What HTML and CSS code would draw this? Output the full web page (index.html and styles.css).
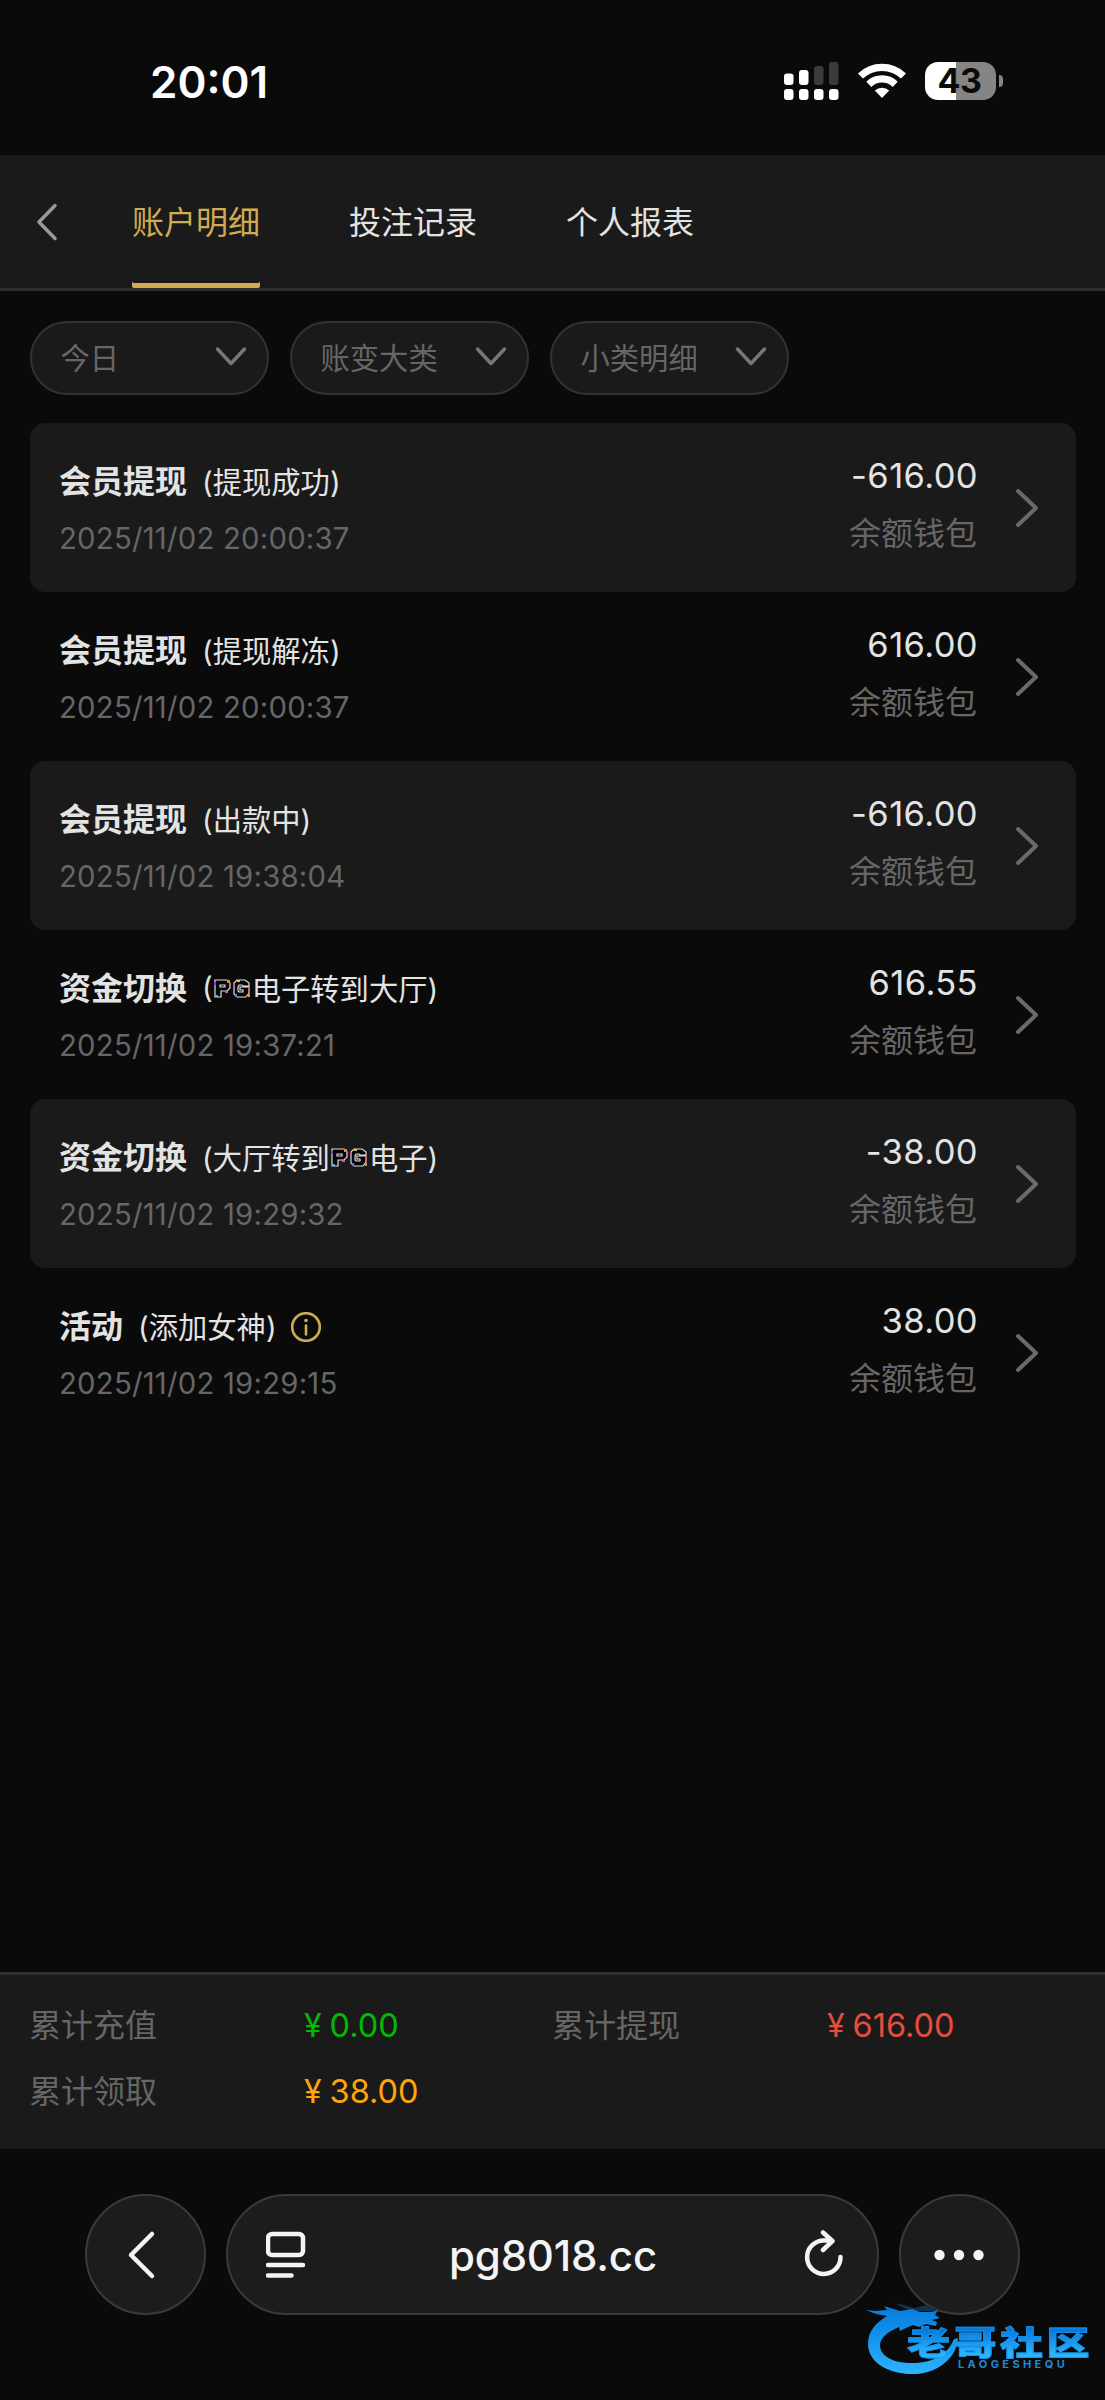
FILE: index.html
```html
<!DOCTYPE html>
<html lang="zh-CN">
<head>
<meta charset="utf-8">
<title>账户明细</title>
<link rel="stylesheet" href="styles.css">
</head>
<body>
<svg width="0" height="0" class="defs">
  <defs>
    <symbol id="next" viewBox="0 0 24 40"><path d="M3 3 21 20 3 37"/></symbol>
    <symbol id="down" viewBox="0 0 32 22"><path d="M2.500 3 16 17.500 29.500 3"/></symbol>
    <symbol id="pg" viewBox="0 0 39 22">
      <path d="M2 2h12l3 3v5l-3 3H8v6H2zM7 7h5v2H7z"/>
      <path d="M24 2h8l4 3v3h-6l-1-1h-3l-1 2v4l1 1h4v-2h-3V9h9v6l-3 4h-9l-3-3V5z"/>
      <g stroke="none"><path fill="#7a35e8" d="M1 4h2v3H1z"/><path fill="#f0883c" d="M14 2h3v3h-3zM35 16h2v3h-2z"/><path fill="#df4bc8" d="M12 13h3v2h-3z"/><path fill="#45bde0" d="M2 17h3v2H2z"/><path fill="#ef4d9d" d="M20 5h2v3h-2z"/><path fill="#e8b93c" d="M24 2h3v2h-3z"/><path fill="#3f8fe8" d="M22 16h2v3h-2z"/><path fill="#ee5a45" d="M35 9h2v3h-2z"/></g>
    </symbol>
  </defs>
</svg>
<header class="status">
  <div class="time">20:01</div>
  <div class="indicators">
    <svg class="signal" width="56" height="40" viewBox="0 0 56 40">
      <g fill="#fff">
        <rect x="0" y="11.500" width="9.500" height="11.500" rx="3"/><rect x="15" y="8" width="9.500" height="15" rx="3"/>
        <rect x="0" y="27" width="9.500" height="11" rx="3"/><rect x="15" y="27" width="9.500" height="11" rx="3"/><rect x="30" y="27" width="9.500" height="11" rx="3"/><rect x="45" y="27" width="9.500" height="11" rx="3"/>
      </g>
      <g fill="#3b3b3b"><rect x="30" y="4" width="9.500" height="19" rx="3"/><rect x="45" y="0" width="9.500" height="23" rx="3"/></g>
    </svg>
    <svg class="wifi" width="48" height="36" viewBox="0 0 48 36">
      <g fill="none" stroke="#fff" stroke-width="7.200"><path d="M2.500 13a31 31 0 0 1 43 0"/><path d="M10.800 21.300a19 19 0 0 1 26.400 0"/></g>
      <path fill="#fff" d="M16.800 27.500a10.500 10.500 0 0 1 14.400 0L24 35z"/>
    </svg>
    <div class="battery"><span>43</span></div>
    <i class="nub"></i>
  </div>
</header>
<nav class="tabs">
  <svg class="back" width="24" height="38" viewBox="0 0 24 38"><path d="M20 2.500 4 19 20 35.500"/></svg>
  <a class="tab active">账户明细</a>
  <a class="tab">投注记录</a>
  <a class="tab">个人报表</a>
</nav>
<main>
  <div class="filters">
    <div class="filter"><span>今日</span><svg><use href="#down"/></svg></div>
    <div class="filter"><span>账变大类</span><svg><use href="#down"/></svg></div>
    <div class="filter"><span>小类明细</span><svg><use href="#down"/></svg></div>
  </div>
  <section class="list">
    <article class="row">
      <div class="info"><h2>会员提现<span>(提现成功)</span></h2><time>2025/11/02 20:00:37</time></div>
      <div class="money"><b>-616.00</b><span>余额钱包</span></div><svg class="next"><use href="#next"/></svg>
    </article>
    <article class="row">
      <div class="info"><h2>会员提现<span>(提现解冻)</span></h2><time>2025/11/02 20:00:37</time></div>
      <div class="money"><b>616.00</b><span>余额钱包</span></div><svg class="next"><use href="#next"/></svg>
    </article>
    <article class="row">
      <div class="info"><h2>会员提现<span>(出款中)</span></h2><time>2025/11/02 19:38:04</time></div>
      <div class="money"><b>-616.00</b><span>余额钱包</span></div><svg class="next"><use href="#next"/></svg>
    </article>
    <article class="row">
      <div class="info"><h2>资金切换<span>(<svg class="pg"><use href="#pg"/></svg>电子转到大厅)</span></h2><time>2025/11/02 19:37:21</time></div>
      <div class="money"><b>616.55</b><span>余额钱包</span></div><svg class="next"><use href="#next"/></svg>
    </article>
    <article class="row">
      <div class="info"><h2>资金切换<span>(大厅转到<svg class="pg"><use href="#pg"/></svg>电子)</span></h2><time>2025/11/02 19:29:32</time></div>
      <div class="money"><b>-38.00</b><span>余额钱包</span></div><svg class="next"><use href="#next"/></svg>
    </article>
    <article class="row">
      <div class="info"><h2>活动<span>(添加女神)</span><svg class="tip" width="30" height="30" viewBox="0 0 30 30"><circle cx="15" cy="15" r="13.800"/><path d="M15 13.500v9"/><circle class="dot" cx="15" cy="8.500" r="1.800"/></svg></h2><time>2025/11/02 19:29:15</time></div>
      <div class="money"><b>38.00</b><span>余额钱包</span></div><svg class="next"><use href="#next"/></svg>
    </article>
  </section>
</main>
<footer class="totals">
  <span>累计充值</span><b class="green"><i>¥</i>0.00</b><span>累计提现</span><b class="red"><i>¥</i>616.00</b>
  <span>累计领取</span><b class="orange"><i>¥</i>38.00</b>
</footer>
<div class="browser">
  <div class="glass round"><svg class="prev" width="32" height="50" viewBox="0 0 32 50"><path d="M26 4 5 25 26 46"/></svg></div>
  <div class="glass address">
    <svg width="40" height="48" viewBox="0 0 40 48"><rect x="2" y="3" width="35" height="21" rx="4"/><path d="M2 34h35M2 44.500h23.500"/></svg>
    <span>pg8018.cc</span>
    <svg width="40" height="50" viewBox="0 0 40 50"><path d="M36.500 27A16.700 16.700 0 1 1 19.800 10.500h8M19 2.500l9.500 8.500-9.500 9"/></svg>
  </div>
  <div class="glass round"><svg class="more" width="50" height="12" viewBox="0 0 50 12"><g class="dots"><circle cx="5.500" cy="6" r="5.200"/><circle cx="25" cy="6" r="5.200"/><circle cx="44.500" cy="6" r="5.200"/></g></svg></div>
  <div class="watermark">
    <svg width="94" height="76" viewBox="0 0 94 76">
      <defs><linearGradient id="blue" x2="0" y2="1"><stop offset="0" stop-color="#087bdc"/><stop offset=".5" stop-color="#1495ee"/><stop offset="1" stop-color="#2db4ff"/></linearGradient></defs>
      <path fill="#12324c" d="M28 0 38 2 48 5 61 2 69 5 73 9 60 8 49 8 40 6z"/>
      <path fill="url(#blue)" d="M0 7 10 8 21 7 18 3 34 8 46 6 54 9 66 9 72 7 69 12 74 15 66 17 71 19 70 23 60 21 53 24 47 22 40 25 34 28 33 24C21 29 14 35 14 43 15 55 31 61 50 60 68 59 82 51 88 36L92 35C91 56 70 70 50 71 22 72 2 59 2 41 2 29 9 20 21 13L10 11z"/>
    </svg>
    <strong>老哥社区</strong>
    <small>LAOGESHEQU</small>
  </div>
</div>
</body>
</html>
```
FILE: styles.css
```css
* { box-sizing: border-box; }
body {
  margin: 0;
  width: 1105px;
  height: 2400px;
  display: flex;
  flex-direction: column;
  overflow: hidden;
  background: #0a0a0a;
  color: #e3e3e3;
  font-family: Inter, "Noto Sans CJK SC", sans-serif;
  font-size: 32px;
}
svg { fill: none; stroke-linecap: round; stroke-linejoin: round; flex: none; }
.defs { position: absolute; }
h2, b, i { font-weight: 400; font-style: normal; margin: 0; }

.status { height: 155px; flex: none; display: flex; justify-content: space-between; padding: 55px 102px 0 150px; color: #fff; }
.time { font-size: 44px; font-weight: 600; line-height: 54px; height: 54px; }
.indicators { display: flex; align-items: flex-start; padding-top: 7px; }
.signal, .wifi { stroke-linecap: butt; }
.wifi { margin: 1px 19px 0 18px; }
.battery { width: 71px; height: 38px; padding-right: 2px; border-radius: 13px; background: linear-gradient(90deg, #fff 31px, #858585 31px); color: #0a0a0a; font-size: 34px; font-weight: 700; line-height: 38px; text-align: center; letter-spacing: -0.5px; }
.nub { width: 4px; height: 12px; margin: 13px 0 0 3px; border-radius: 0 6px 6px 0; background: #858585; }

.tabs { height: 136px; flex: none; display: flex; align-items: stretch; gap: 89px; padding-left: 35px; background: #1a1a1a; border-bottom: 3px solid #2e2e2e; }
.back { align-self: center; margin-right: -16px; stroke: #999; stroke-width: 3.5; }
.tab { display: flex; align-items: center; width: 128px; border-radius: 2px; white-space: nowrap; padding-bottom: 4px; }
.tab.active { color: #d0ab52; box-shadow: inset 0 -5px #d0ab52; }

main { flex: 1; padding: 29.5px 29.5px 0; }
.filters { display: flex; gap: 21px; }
.filter { width: 239px; height: 74px; display: flex; align-items: center; justify-content: space-between; padding: 0 20px 2px 29px; border: 2px solid #323232; border-radius: 37px; background: #1a1a1a; color: #666; font-size: 29.3px; }
.filter span { padding-bottom: 2px; }
.filter svg { width: 32px; height: 22px; stroke: #777; stroke-width: 3.5; }

.list { margin-top: 28.5px; }
.row { height: 169px; display: flex; padding: 0 36.5px 0 29.5px; border-radius: 15px; }
.row:nth-child(odd) { background: #1a1a1a; }
.info { flex: 1; padding-top: 32px; }
.info h2 { display: flex; align-items: center; height: 48px; font-size: 32px; font-weight: 700; }
.info h2 span { display: flex; align-items: center; margin: 2px 0 0 15px; font-size: 29.3px; font-weight: 400; }
.info time { display: block; margin-top: 18px; font-size: 29.3px; line-height: 36px; color: #666; letter-spacing: .22px; }
.pg { width: 39px; height: 22px; stroke: #ddd; stroke-width: 1.2; fill: #050505; stroke-linejoin: miter; margin-top: 4px; }
.tip { margin: 6px 0 0 14px; stroke: #d0ab52; stroke-width: 2.6; }
.tip .dot { fill: #d0ab52; stroke: none; }
.money { display: flex; flex-direction: column; align-items: flex-end; padding-top: 32px; }
.money b { font-size: 34.5px; line-height: 42px; letter-spacing: .4px; margin-right: -1px; }
.money span { margin: 13px 0 0; line-height: 48px; color: #666; }
.next { width: 24px; height: 40px; align-self: center; margin-left: 38px; stroke: #6a6a6a; stroke-width: 4; }

.totals { height: 177px; flex: none; display: grid; grid-template-columns: 274px 249px 274px 250px; grid-auto-rows: 66px; align-items: center; padding: 17px 0 0 30px; background: #1a1a1a; border-top: 3px solid #2e2e2e; color: #666; }
.totals > span { padding-bottom: 5px; margin-left: -1px; }
.totals b { font-size: 32.5px; }
.totals i { font-size: 32px; margin-right: 8px; }
.green { color: #0b0; }
.red { color: #e74c3c; }
.orange { color: #ffa50a; }

.browser { position: relative; height: 251px; flex: none; display: flex; gap: 20px; padding: 45px 85px 0; }
.glass { height: 121px; display: flex; align-items: center; justify-content: center; border: 2px solid #3a3a3a; border-radius: 61px; background: #1c1c1c; color: #f4f4f4; }
.glass svg { stroke: #f4f4f4; stroke-width: 4.5; }
.glass .prev { margin-right: 7px; }
.glass .more { margin-right: 2px; }
.glass .dots { fill: #f4f4f4; stroke: none; }
.round { width: 121px; flex: none; }
.address { width: 653px; justify-content: space-between; padding: 0 33px 0 38px; font-size: 42px; font-weight: 500; letter-spacing: -.2px; }
.address span { margin: 1px 4px 0 0; }
.watermark { position: absolute; left: 866px; top: 154px; width: 224px; height: 80px; }
.watermark strong { position: absolute; left: 41px; top: 14px; font: 900 43px/48px "Noto Sans CJK SC", sans-serif; letter-spacing: 3.5px; white-space: nowrap; background: linear-gradient(#0878da 20%, #2db4ff 85%); -webkit-background-clip: text; color: transparent; -webkit-text-stroke: 1px #1593ec; transform: scaleY(.76); }
.watermark small { position: absolute; left: 92px; top: 55px; font: 700 11px/12px Inter, sans-serif; letter-spacing: 3.4px; color: #2288d0; }
```
